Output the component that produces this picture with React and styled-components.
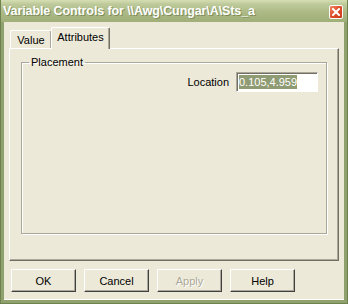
import React from "react";
import styled, { createGlobalStyle } from "styled-components";

const Global = createGlobalStyle`
  html, body { margin: 0; padding: 0; background: #ECE9D8; }
  body { font-family: "Liberation Sans", Arial, sans-serif; font-size: 11px; }
  * { box-sizing: border-box; }
`;

const Window = styled.div`
  width: 348px;
  height: 304px;
  display: flex;
  flex-direction: column;
  background: #8FA26D;
  border-left: 1px solid #6E8250;
  border-right: 1px solid #6E8250;
  border-bottom: 1px solid #6E8250;
`;

const TitleBar = styled.div`
  height: 22px;
  flex: none;
  display: flex;
  align-items: center;
  justify-content: space-between;
  padding: 0 4px 0 2px;
  background: linear-gradient(to bottom, #D5DEB2 0%, #BDC99A 20%, #ADBA86 55%, #A0AE78 100%);
`;

const Title = styled.div`
  font-family: "Liberation Sans", Arial, sans-serif;
  font-weight: bold;
  font-size: 12.5px;
  color: #ffffff;
  text-shadow: 1px 1px 0 #7E8C5A;
  white-space: nowrap;
  letter-spacing: -0.1px;
`;

const CloseButton = styled.div`
  width: 14px;
  height: 14px;
  border: 1px solid #ffffff;
  border-radius: 2px;
  background: linear-gradient(135deg, #F08A6C 0%, #E0502D 45%, #C83A1A 100%);
  display: flex;
  align-items: center;
  justify-content: center;
  margin-top: 1px;
`;

const Client = styled.div`
  flex: 1;
  margin: 0 3px 3px 3px;
  background: #ECE9D8;
  border-bottom: 1px solid #ffffff;
  display: flex;
  flex-direction: column;
  padding: 5px 5px 7px 5px;
`;

const TabRow = styled.div`
  height: 21px;
  display: flex;
  align-items: flex-end;
  padding-left: 1px;
  position: relative;
  z-index: 1;
`;

const Tab = styled.div`
  height: ${(p) => (p.$active ? "22px" : "18px")};
  width: ${(p) => p.$w}px;
  margin-bottom: ${(p) => (p.$active ? "-1px" : "0")};
  margin-left: ${(p) => (p.$active ? "-1px" : "0")};
  background: #ECE9D8;
  border-top: 1px solid #ffffff;
  border-left: 1px solid #ffffff;
  border-right: 1px solid #716F64;
  box-shadow: inset -1px 0 0 #ACA899;
  border-radius: 2px 2px 0 0;
  display: flex;
  align-items: ${(p) => (p.$active ? "flex-start" : "center")};
  padding-top: ${(p) => (p.$active ? "3px" : "0")};
  justify-content: center;
  color: #000;
  font-size: 11px;
`;

const Panel = styled.div`
  height: 213px;
  border-top: 1px solid #ffffff;
  border-left: 1px solid #ffffff;
  border-right: 1px solid #716F64;
  border-bottom: 1px solid #716F64;
  box-shadow: inset -1px -1px 0 #ACA899;
  padding: 7px 11px 26px 11px;
  display: flex;
  flex-direction: column;
`;

const Group = styled.fieldset`
  flex: 1;
  margin: 0;
  padding: 2px 8px 0 8px;
  border: 1px solid #ACA899;
  box-shadow: 1px 1px 0 #ffffff, inset 1px 1px 0 #ffffff;
  display: flex;
  flex-direction: column;
`;

const Legend = styled.legend`
  padding: 0 2px;
  margin-left: -1px;
  font-size: 11px;
  color: #000;
  line-height: 13px;
`;

const FieldRow = styled.div`
  display: flex;
  justify-content: flex-end;
  align-items: center;
  gap: 7px;
  margin-top: 1px;
`;

const Label = styled.span`
  font-size: 11px;
  color: #000;
`;

const TextBox = styled.div`
  width: 82px;
  height: 20px;
  background: #ffffff;
  border-top: 1px solid #ACA899;
  border-left: 1px solid #ACA899;
  border-right: 1px solid #ffffff;
  border-bottom: 1px solid #ffffff;
  box-shadow: inset 1px 1px 0 #716F64;
  padding: 3px 0 0 2px;
  overflow: hidden;
  white-space: nowrap;
`;

const Selected = styled.span`
  background: #8F9B72;
  color: #ffffff;
  font-size: 11px;
  padding: 1px 0;
`;

const ButtonRow = styled.div`
  margin-top: 8px;
  display: flex;
  gap: 8px;
  padding-left: 2px;
`;

const Button = styled.div`
  width: 65px;
  height: 23px;
  display: flex;
  align-items: center;
  justify-content: center;
  background: #ECE9D8;
  border-top: 1px solid #ffffff;
  border-left: 1px solid #ffffff;
  border-right: 1px solid #404040;
  border-bottom: 1px solid #404040;
  box-shadow: inset -1px -1px 0 #ACA899;
  font-size: 11px;
  color: ${(p) => (p.$disabled ? "#ACA899" : "#000")};
  text-shadow: ${(p) => (p.$disabled ? "1px 1px 0 #ffffff" : "none")};
`;

export default function App() {
  return (
    <>
      <Global />
      <Window>
        <TitleBar>
          <Title>Variable Controls for \\Awg\Cungar\A\Sts_a</Title>
          <CloseButton>
            <svg width="8" height="8" viewBox="0 0 8 8">
              <path d="M1 1 L7 7 M7 1 L1 7" stroke="#fff" strokeWidth="2" strokeLinecap="square" />
            </svg>
          </CloseButton>
        </TitleBar>
        <Client>
          <TabRow>
            <Tab $w={42}>Value</Tab>
            <Tab $w={59} $active>Attributes</Tab>
          </TabRow>
          <Panel>
            <Group>
              <Legend>Placement</Legend>
              <FieldRow>
                <Label>Location</Label>
                <TextBox>
                  <Selected>0.105,4.959</Selected>
                </TextBox>
              </FieldRow>
            </Group>
          </Panel>
          <ButtonRow>
            <Button>OK</Button>
            <Button>Cancel</Button>
            <Button $disabled>Apply</Button>
            <Button>Help</Button>
          </ButtonRow>
        </Client>
      </Window>
    </>
  );
}
